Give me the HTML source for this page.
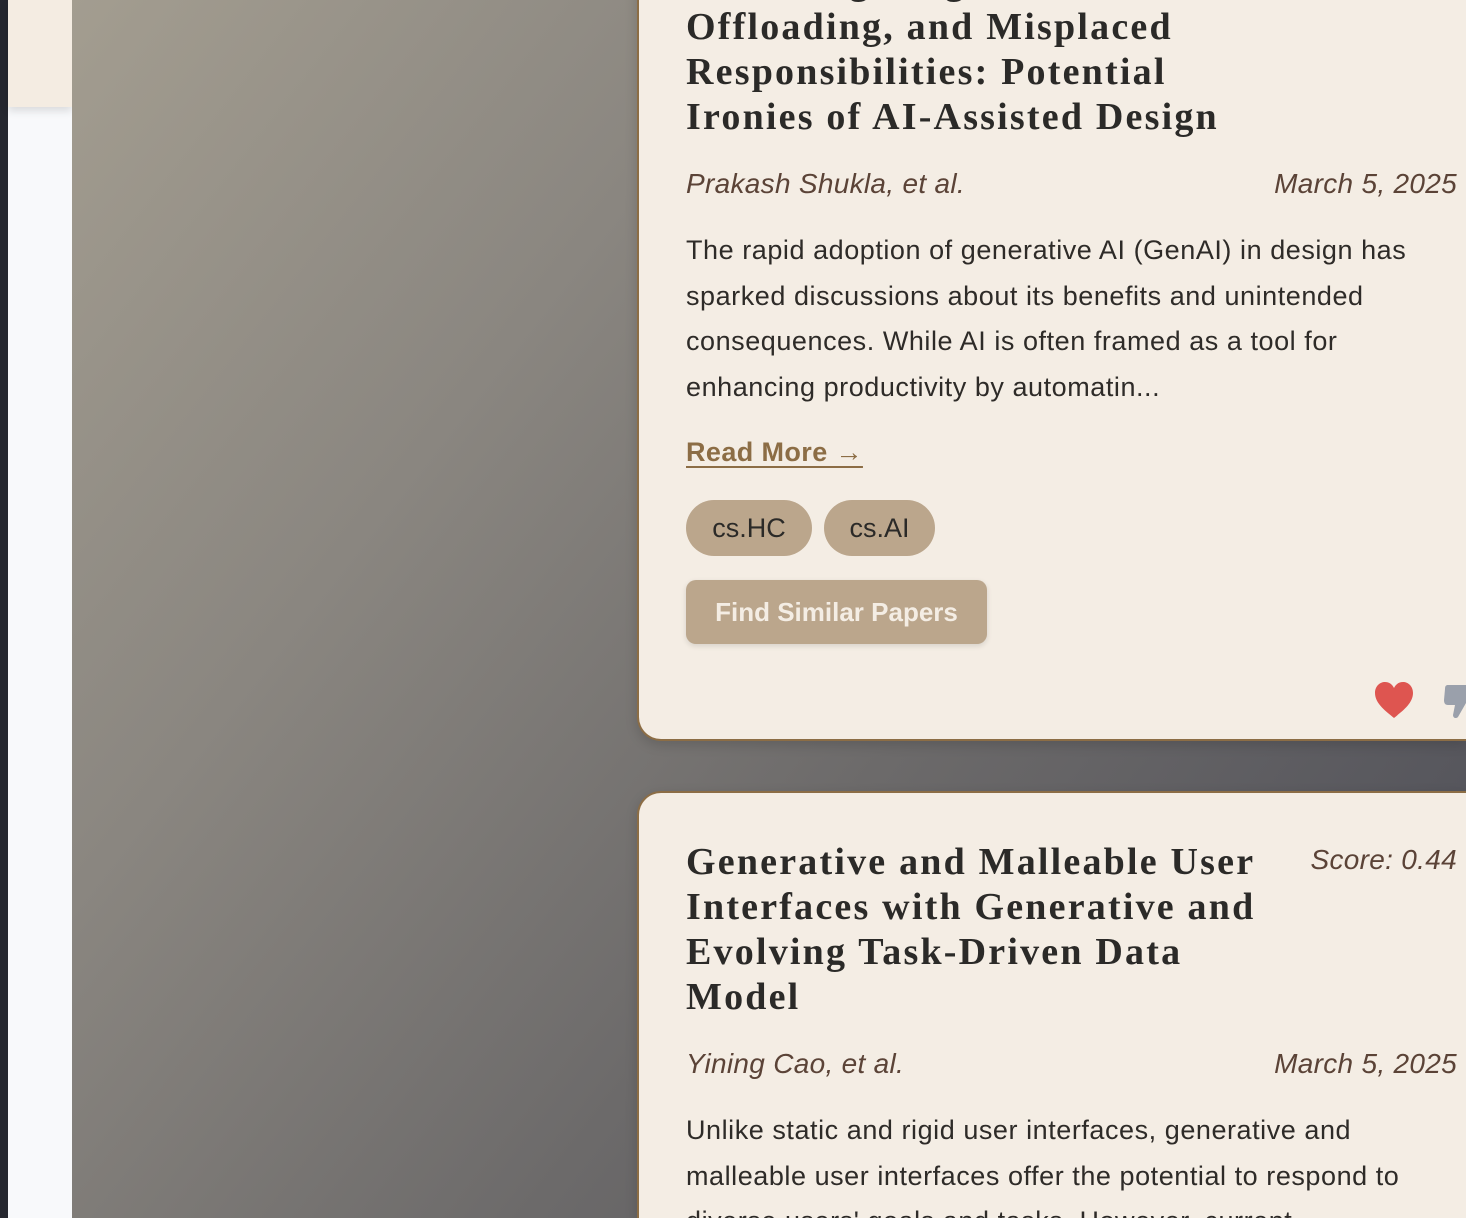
<!DOCTYPE html>
<html><head><meta charset="utf-8"><style>
*{margin:0;padding:0;box-sizing:border-box}
html,body{width:1466px;height:1218px;overflow:hidden}
body{position:relative;font-family:"Liberation Sans",sans-serif;background:#f8f9fb}
.dark{position:absolute;left:0;top:0;width:8px;height:1218px;background:#25272f}
.white{position:absolute;left:8px;top:0;width:64px;height:1218px;background:#f8f9fb}
.beige{position:absolute;left:8px;top:0;width:64px;height:107px;background:#f4ece2;box-shadow:0 4px 8px rgba(0,0,0,.12)}
.bg{position:absolute;left:72px;top:0;width:1394px;height:1218px;background:linear-gradient(128deg,#a39d90 0%,#8a8680 30%,#6c6a6a 60%,#4a4b55 100%)}
.card{position:absolute;left:637px;width:829px;background:#f4ede4;border:2px solid #8c6d45;border-right:none;border-radius:24px 0 0 24px;box-shadow:0 4px 12px rgba(0,0,0,.15)}
.t{position:absolute;left:686px;font-family:"Liberation Serif",Georgia,serif;font-weight:bold;font-size:38px;letter-spacing:2.2px;line-height:45px;color:#2b2a28;white-space:nowrap}
.meta{position:absolute;font-style:italic;font-size:28px;letter-spacing:0.3px;color:#5b4337;line-height:30px;white-space:nowrap}
.p{position:absolute;left:686px;font-size:27px;letter-spacing:0.55px;line-height:45.5px;color:#2e2b28;white-space:nowrap}
.rm{position:absolute;left:686px;top:437px;font-size:27px;letter-spacing:0.4px;color:#8c6d45;text-decoration:underline;text-underline-offset:5px;font-weight:bold}
.tag{position:absolute;top:500px;height:56px;border-radius:28px;background:#bba68c;color:#2b2a28;font-size:27px;line-height:56px;text-align:center}
.btn{position:absolute;left:686px;top:580px;width:301px;height:64px;border-radius:10px;background:#bba68c;color:#f4ede4;font-size:26px;font-weight:bold;line-height:64px;text-align:center;box-shadow:0 2px 6px rgba(0,0,0,.12)}
</style></head><body>
<div class="dark"></div><div class="white"></div><div class="beige"></div>
<div class="bg"></div>
<div class="card" style="top:-40px;height:781px"></div>
<div class="card" style="top:791px;height:427px;border-bottom:none;border-radius:24px 0 0 0"></div>

<div class="t" style="top:-40px">Deskilling, Cognitive<br>Offloading, and Misplaced<br>Responsibilities: Potential<br>Ironies of AI-Assisted Design</div>
<div class="meta" style="left:686px;top:169px">Prakash Shukla, et al.</div>
<div class="meta" style="right:9px;top:169px">March 5, 2025</div>
<div class="p" style="top:228px">The rapid adoption of generative AI (GenAI) in design has<br>sparked discussions about its benefits and unintended<br>consequences. While AI is often framed as a tool for<br>enhancing productivity by automatin...</div>
<div class="rm">Read More →</div>
<div class="tag" style="left:686px;width:126px">cs.HC</div>
<div class="tag" style="left:824px;width:111px">cs.AI</div>
<div class="btn">Find Similar Papers</div>
<svg style="position:absolute;left:1373px;top:680px" width="42" height="40" viewBox="0 0 42 40"><path d="M21 38 C14 32 2 24 2 13 C2 6 7 2 12 2 C16 2 19 4 21 8 C23 4 26 2 30 2 C35 2 40 6 40 13 C40 24 28 32 21 38Z" fill="#de5550"/></svg>
<svg style="position:absolute;left:1444px;top:683px" width="22" height="38" viewBox="0 0 22 38"><path d="M4 2 H22 V20 L14 34 C12 36 9 35 9 32 L11 22 H4 C1 22 0 20 0 17 L1 6 C1 3 2 2 4 2Z" fill="#9aa0ab"/></svg>

<div class="t" style="top:840px">Generative and Malleable User<br>Interfaces with Generative and<br>Evolving Task-Driven Data<br>Model</div>
<div class="meta" style="right:9px;top:845px">Score: 0.44</div>
<div class="meta" style="left:686px;top:1049px">Yining Cao, et al.</div>
<div class="meta" style="right:9px;top:1049px">March 5, 2025</div>
<div class="p" style="top:1108px;height:110px;overflow:hidden">Unlike static and rigid user interfaces, generative and<br>malleable user interfaces offer the potential to respond to<br>diverse users' goals and tasks. However, current</div>
</body></html>
